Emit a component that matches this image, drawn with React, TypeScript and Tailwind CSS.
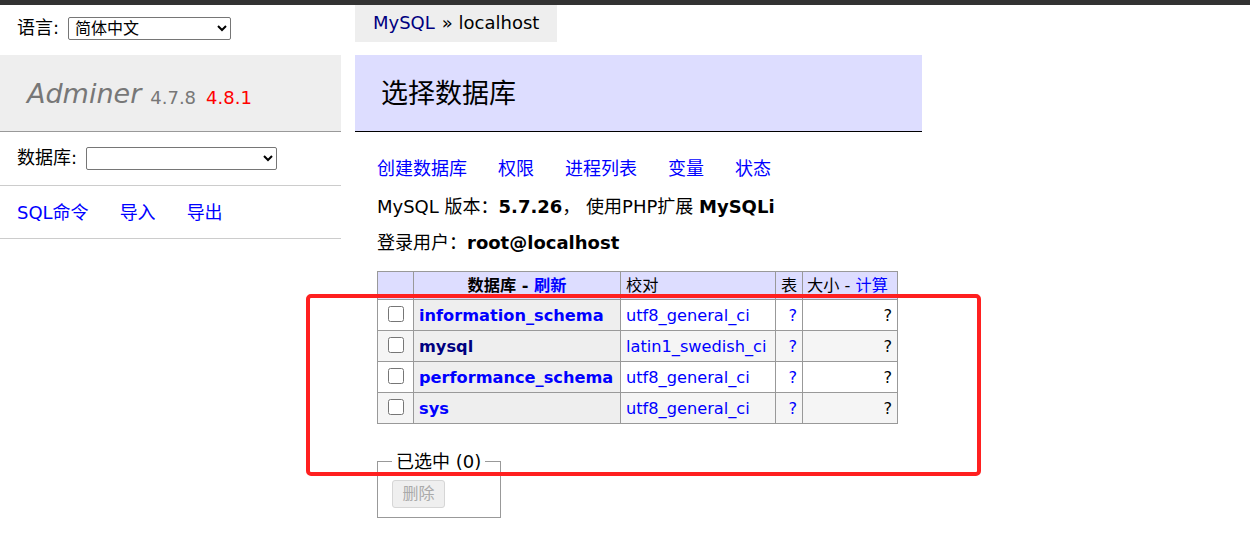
const font = '"DejaVu Sans", "Noto Sans CJK SC", sans-serif';

type Db = { name: string; collation: string; visited?: boolean };

const dbs: Db[] = [
  { name: 'information_schema', collation: 'utf8_general_ci' },
  { name: 'mysql', collation: 'latin1_swedish_ci', visited: true },
  { name: 'performance_schema', collation: 'utf8_general_ci' },
  { name: 'sys', collation: 'utf8_general_ci' },
];

function Sidebar() {
  return (
    <div className="w-[341px] shrink-0">
      <div className="flex items-center h-[47px] pl-[17px]">
        <span>语言:</span>
        <select className="ml-[9px] w-[163px] h-[23px] border border-[#767676] rounded-[2px] bg-white text-[16px] leading-none pl-[2px]">
          <option>简体中文</option>
        </select>
      </div>
      <div className="mt-[3px] h-[77px] bg-[#eee] border-b border-[#999] flex items-center pl-[27px] pt-[2px]">
        <span className="italic text-[#777] text-[27px]">Adminer</span>
        <span className="text-[#777] text-[18px] ml-[9px] mt-[8px]">4.7.8</span>
        <span className="text-[#f00] text-[18px] ml-[10px] mt-[8px]">4.8.1</span>
      </div>
      <div className="h-[54px] border-b border-[#ccc] flex items-center pl-[17px]">
        <span>数据库:</span>
        <select className="ml-[9px] w-[191px] h-[23px] border border-[#767676] rounded-[2px] bg-white">
          <option></option>
        </select>
      </div>
      <div className="h-[53px] border-b border-[#ccc] flex items-center pl-[17px] pt-[3px] gap-[31px]">
        <a className="text-[#00f]">SQL命令</a>
        <a className="text-[#00f]">导入</a>
        <a className="text-[#00f]">导出</a>
      </div>
    </div>
  );
}

function DbTable() {
  return (
    <table className="table-fixed border-collapse border border-[#999] w-[520px] text-[16.2px] leading-[1.25] mt-[16px]">
      <colgroup>
        <col className="w-[36px]" />
        <col className="w-[207px]" />
        <col className="w-[155px]" />
        <col className="w-[27px]" />
        <col className="w-[95px]" />
      </colgroup>
      <thead>
        <tr className="h-[28px] bg-[#ddf]">
          <td className="border border-[#999]"></td>
          <th className="border border-[#999] text-center font-bold px-[8px] pt-[2px]">
            数据库 - <a className="text-[#00f]">刷新</a>
          </th>
          <td className="border border-[#999] px-[5px] pt-[2px]">校对</td>
          <td className="border border-[#999] px-[3px] text-center pt-[2px]">表</td>
          <td className="border border-[#999] px-[4px] whitespace-nowrap pt-[2px]">
            大小 - <a className="text-[#00f]">计算</a>
          </td>
        </tr>
      </thead>
      <tbody>
        {dbs.map((db, i) => (
          <tr key={db.name} className={i % 2 === 1 ? 'h-[31px] bg-[#f5f5f5]' : 'h-[31px] bg-white'}>
            <td className="border border-[#999] text-center align-middle">
              <input type="checkbox" className="w-[16px] h-[16px] align-middle mt-[-2px]" />
            </td>
            <th className="border border-[#999] bg-[#eee] text-left px-[5px] pt-[3px] whitespace-nowrap">
              <a className={db.visited ? 'text-[#000080] font-bold' : 'text-[#00f] font-bold'}>{db.name}</a>
            </th>
            <td className="border border-[#999] px-[5px] pt-[3px] whitespace-nowrap">
              <a className="text-[#00f]">{db.collation}</a>
            </td>
            <td className="border border-[#999] px-[5px] pt-[3px] text-right">
              <a className="text-[#00f]">?</a>
            </td>
            <td className="border border-[#999] px-[5px] pt-[3px] text-right">?</td>
          </tr>
        ))}
      </tbody>
    </table>
  );
}

function Content() {
  return (
    <div className="ml-[14px] flex-1">
      <div className="inline-flex items-center h-[37px] bg-[#eee] px-[18px]">
        <a className="text-[#000080]">MySQL</a>
        <span className="ml-[7px]">» localhost</span>
      </div>
      <h2 className="mt-[13px] w-[567px] h-[77px] bg-[#ddf] border-b border-black flex items-center pl-[26px] pt-[2px] text-[27px] font-normal">
        选择数据库
      </h2>
      <div className="pl-[22px]">
        <div className="mt-[26px] flex gap-[31px]">
          <a className="text-[#00f]">创建数据库</a>
          <a className="text-[#00f]">权限</a>
          <a className="text-[#00f]">进程列表</a>
          <a className="text-[#00f]">变量</a>
          <a className="text-[#00f]">状态</a>
        </div>
        <p className="mt-[15px]">
          MySQL 版本：<b>5.7.26</b>， 使用PHP扩展 <b>MySQLi</b>
        </p>
        <p className="mt-[14px]">
          登录用户：<b>root@localhost</b>
        </p>
        <DbTable />
        <fieldset className="mt-[27px] inline-block w-[124px] border border-[#999] px-[14px] pt-[7px] pb-[9px]">
          <legend className="px-[4px]">已选中 (0)</legend>
          <button
            disabled
            className="h-[28px] w-[53px] border border-[#d6d6d6] rounded-[3px] bg-[#efefef] text-[#aaa] text-[16px]"
          >
            删除
          </button>
        </fieldset>
      </div>
    </div>
  );
}

export default function App() {
  return (
    <div className="relative w-[1250px] h-[555px] bg-white text-black text-[18px] leading-[1.25] overflow-hidden" style={{ fontFamily: font }}>
      <div className="h-[5px] bg-[#323232]" />
      <div className="flex">
        <Sidebar />
        <Content />
      </div>
      <div className="absolute left-[306px] top-[294px] w-[675px] h-[182px] border-[4px] border-[#ff2020] rounded-[5px] pointer-events-none" />
    </div>
  );
}
